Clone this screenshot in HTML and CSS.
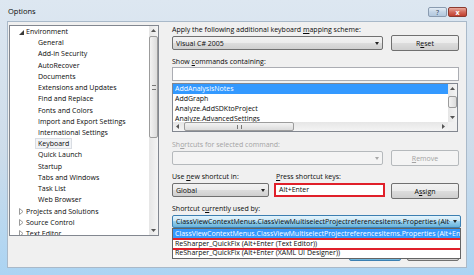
FILE: index.html
```html
<!DOCTYPE html>
<html lang="en">
<head>
    <meta charset="UTF-8">
    <meta name="viewport" content="width=device-width, initial-scale=1.0">
    <title>Options</title>
    <link rel="stylesheet" href="styles.css">
</head>
<body>
    <div class="window">
        <div class="titlebar">
            <span class="title">Options</span>
            <div class="caption-buttons">
                <span class="caption-button help">?</span>
                <span class="caption-button close">x</span>
            </div>
        </div>

        <div class="client">
            <!-- Category tree on the left -->
            <div class="tree">
                <ul class="tree-items">
                    <li class="node"><svg class="twisty" width="5" height="5" viewBox="0 0 5 5"><path d="M5 0V5H0Z" fill="#3a3a3a"/></svg>Environment</li>
                    <li class="leaf">General</li>
                    <li class="leaf">Add-in Security</li>
                    <li class="leaf">AutoRecover</li>
                    <li class="leaf">Documents</li>
                    <li class="leaf">Extensions and Updates</li>
                    <li class="leaf">Find and Replace</li>
                    <li class="leaf">Fonts and Colors</li>
                    <li class="leaf">Import and Export Settings</li>
                    <li class="leaf">International Settings</li>
                    <li class="leaf"><span class="current">Keyboard</span></li>
                    <li class="leaf">Quick Launch</li>
                    <li class="leaf">Startup</li>
                    <li class="leaf">Tabs and Windows</li>
                    <li class="leaf">Task List</li>
                    <li class="leaf">Web Browser</li>
                    <li class="node"><svg class="twisty" width="5" height="7" viewBox="0 0 5 7"><path d="M0.5 0.5L4 3.5L0.5 6.5Z" fill="none" stroke="#9a9a9a"/></svg>Projects and Solutions</li>
                    <li class="node"><svg class="twisty" width="5" height="7" viewBox="0 0 5 7"><path d="M0.5 0.5L4 3.5L0.5 6.5Z" fill="none" stroke="#9a9a9a"/></svg>Source Control</li>
                    <li class="node"><svg class="twisty" width="5" height="7" viewBox="0 0 5 7"><path d="M0.5 0.5L4 3.5L0.5 6.5Z" fill="none" stroke="#9a9a9a"/></svg>Text Editor</li>
                </ul>
                <div class="vscroll tree-scroll">
                    <div class="arrow"><svg width="5" height="3" viewBox="0 0 5 3"><path d="M0 3L2.5 0L5 3Z" fill="#555"/></svg></div>
                    <div class="track"><div class="thumb tree-thumb"><span class="grip-h"></span></div></div>
                    <div class="arrow"><svg width="5" height="3" viewBox="0 0 5 3"><path d="M0 0L2.5 3L5 0Z" fill="#555"/></svg></div>
                </div>
            </div>

            <!-- Keyboard settings -->
            <div class="settings">
                <div class="label">Apply the following additional keyboard <u>m</u>apping scheme:</div>
                <div class="row">
                    <div class="select scheme"><span class="value">Visual C# 2005</span><span class="caret"></span></div>
                    <div class="button">R<u>e</u>set</div>
                </div>

                <div class="label spaced">Show <u>c</u>ommands containing:</div>
                <div class="textbox"></div>

                <div class="listbox">
                    <ul class="list-items">
                        <li class="selected">AddAnalysisNotes</li>
                        <li>AddGraph</li>
                        <li>Analyze.AddSDKtoProject</li>
                        <li>Analyze.AdvancedSettings</li>
                    </ul>
                    <div class="vscroll">
                        <div class="arrow"><svg width="5" height="3" viewBox="0 0 5 3"><path d="M0 3L2.5 0L5 3Z" fill="#555"/></svg></div>
                        <div class="track"><div class="thumb list-thumb"></div></div>
                        <div class="arrow"><svg width="5" height="3" viewBox="0 0 5 3"><path d="M0 0L2.5 3L5 0Z" fill="#555"/></svg></div>
                    </div>
                    <div class="hscroll">
                        <div class="arrow"><svg width="3" height="5" viewBox="0 0 3 5"><path d="M3 0L0 2.5L3 5Z" fill="#555"/></svg></div>
                        <div class="track"><div class="thumb list-hthumb"><span class="grip-v"></span></div></div>
                        <div class="arrow"><svg width="3" height="5" viewBox="0 0 3 5"><path d="M0 0L3 2.5L0 5Z" fill="#555"/></svg></div>
                    </div>
                    <div class="corner"></div>
                </div>

                <div class="label disabled section">Sh<u>o</u>rtcuts for selected command:</div>
                <div class="row">
                    <div class="select scheme disabled"><span class="value"></span><span class="caret"></span></div>
                    <div class="button disabled"><u>R</u>emove</div>
                </div>

                <div class="row labels">
                    <div class="label scope-label">Use <u>n</u>ew shortcut in:</div>
                    <div class="label"><u>P</u>ress shortcut keys:</div>
                </div>
                <div class="row">
                    <div class="select scope"><span class="value">Global</span><span class="caret"></span></div>
                    <div class="textbox keys">Alt+Enter</div>
                    <div class="button assign">A<u>s</u>sign</div>
                </div>

                <div class="label used-label">Shortcut c<u>u</u>rrently used by:</div>
                <div class="combo">
                    <div class="select open"><span class="value">ClassViewContextMenus.ClassViewMultiselectProjectreferencesItems.Properties (Alt+Enter (Global))</span><span class="caret"></span></div>
                    <ul class="dropdown">
                        <li class="selected">ClassViewContextMenus.ClassViewMultiselectProjectreferencesItems.Properties (Alt+Enter (Global))</li>
                        <li class="marked">ReSharper_QuickFix (Alt+Enter (Text Editor))</li>
                        <li>ReSharper_QuickFix (Alt+Enter (XAML UI Designer))</li>
                    </ul>
                </div>

                <div class="dialog-buttons">
                    <div class="button default">OK</div>
                    <div class="button">Cancel</div>
                </div>
            </div>
        </div>
    </div>
</body>
</html>
```

FILE: styles.css
```css
body {
    margin: 0;
    width: 474px;
    height: 275px;
    overflow: hidden;
    font-family: "Open Sans", sans-serif;
    font-size: 7px;
    color: #0a0a0a;
    background: #a9d5f4;
}
ul {
    list-style: none;
    margin: 0;
    padding: 0;
}
.window {
    height: 275px;
    box-sizing: border-box;
    padding: 0 7px 7px;
    display: flex;
    flex-direction: column;
    background: linear-gradient(#dde7f1, #cddcea 55%, #abd4f3);
}
.titlebar {
    height: 21px;
    display: flex;
    justify-content: space-between;
    align-items: center;
}
.title {
    margin-left: 1px;
    font-size: 7.5px;
}
.caption-buttons {
    align-self: flex-start;
    margin-top: 7px;
    display: flex;
    gap: 1px;
}
.caption-button {
    width: 19px;
    height: 10px;
    box-sizing: border-box;
    border-radius: 2px;
    display: flex;
    justify-content: center;
    align-items: center;
    font-size: 7px;
    line-height: 1;
}
.help {
    border: 1px solid #8a9bb0;
    background: linear-gradient(#e4edf6, #c3d4e6 50%, #b3c8de);
    color: #2c3e55;
}
.close {
    border: 1px solid #8b3a30;
    background: linear-gradient(#e9a99c, #d2695b 50%, #c1402f);
    color: #fff;
    font-weight: bold;
}
.client {
    flex: 1;
    display: flex;
    gap: 13px;
    padding: 3px 7px 0 1px;
    background: #f0f0f0;
    border: 1px solid #a9b9c9;
    overflow: hidden;
}

/* tree */
.tree {
    width: 150px;
    height: 211px;
    box-sizing: border-box;
    display: flex;
    background: #fff;
    border: 1px solid #828790;
    overflow: hidden;
}
.tree-items {
    flex: 1;
    line-height: 11.22px;
    white-space: nowrap;
    overflow: hidden;
}
.node {
    padding-left: 7px;
}
.twisty {
    width: 9px;
    vertical-align: -1px;
}
.leaf {
    padding-left: 28px;
}
.current {
    margin-left: -3px;
    padding: 0 2px;
    background: #f2f4f7;
    border: 1px solid #d9dde3;
}

/* scrollbars */
.vscroll {
    width: 9px;
    display: flex;
    flex-direction: column;
    background: linear-gradient(90deg, #e6e6e6, #f4f4f4);
}
.hscroll {
    height: 9px;
    display: flex;
    background: linear-gradient(#e6e6e6, #f4f4f4);
}
.arrow {
    flex: 0 0 9px;
    display: flex;
    justify-content: center;
    align-items: center;
}
.track {
    flex: 1;
    display: flex;
    flex-direction: column;
}
.hscroll .track {
    flex-direction: row;
}
.thumb {
    box-sizing: border-box;
    border: 1px solid #9c9c9c;
    border-radius: 2px;
    background: linear-gradient(90deg, #f3f3f3, #dcdcdc);
    display: flex;
    justify-content: center;
    align-items: center;
}
.tree-thumb {
    height: 102px;
    margin-top: 1px;
}
.list-thumb {
    height: 12px;
    margin-top: 3px;
}
.list-hthumb {
    width: 110px;
    margin-left: 2px;
    background: linear-gradient(#f3f3f3, #dcdcdc);
}
.grip-h {
    width: 4px;
    height: 3px;
    border-top: 1px solid #777;
    border-bottom: 1px solid #777;
}
.grip-v {
    width: 3px;
    height: 4px;
    border-left: 1px solid #777;
    border-right: 1px solid #777;
}

/* settings column */
.settings {
    width: 287px;
    display: flex;
    flex-direction: column;
}
.label {
    height: 10px;
    line-height: 10px;
    white-space: nowrap;
}
.disabled {
    color: #a3a3a3;
}
.spaced {
    margin-top: 6px;
}
.section {
    margin-top: 8px;
}
.row {
    display: flex;
    gap: 8px;
    align-items: flex-start;
}
.labels {
    margin-top: 6px;
    gap: 0;
}
.labels + .row {
    margin-top: 1px;
    gap: 0;
}
.scope-label {
    width: 104px;
}
.select {
    height: 14px;
    box-sizing: border-box;
    display: flex;
    align-items: center;
    padding: 0 3px;
    border: 1px solid #707070;
    border-radius: 2px;
    background: linear-gradient(#f2f2f2, #ebebeb 50%, #dddddd 50%, #cfcfcf);
}
.value {
    flex: 1;
    overflow: hidden;
    white-space: nowrap;
}
.caret {
    width: 0;
    height: 0;
    margin-left: 3px;
    border-left: 2.5px solid transparent;
    border-right: 2.5px solid transparent;
    border-top: 3px solid #222;
}
.scheme {
    width: 211px;
    margin-top: 1px;
}
.select.disabled {
    border-color: #b5b9bc;
    background: #f4f4f4;
}
.select.disabled .caret {
    border-top-color: #a8a8a8;
}
.scope {
    width: 97px;
}
.button {
    width: 68px;
    height: 16px;
    box-sizing: border-box;
    display: flex;
    justify-content: center;
    align-items: center;
    border: 1px solid #707070;
    border-radius: 2px;
    background: linear-gradient(#f2f2f2, #ebebeb 50%, #dddddd 50%, #cfcfcf);
}
.button.disabled {
    border-color: #b5b9bc;
    background: #f4f4f4;
}
.assign {
    margin-left: 6px;
}
.textbox {
    height: 14px;
    box-sizing: border-box;
    padding-left: 3px;
    line-height: 12px;
    background: #fff;
    border: 1px solid #abadb3;
}
.keys {
    width: 111px;
    margin-left: 5px;
    border: 2px solid #e0202a;
    line-height: 10px;
}

/* command list */
.listbox {
    width: 286px;
    height: 49px;
    margin-top: 2px;
    box-sizing: border-box;
    display: grid;
    grid-template-columns: 1fr 9px;
    grid-template-rows: 1fr 9px;
    background: #fff;
    border: 1px solid #828790;
}
.list-items {
    line-height: 10px;
    overflow: hidden;
}
.list-items li {
    padding-left: 2px;
}
.selected {
    background: #3399ff;
    color: #fff;
}
.corner {
    background: #f0f0f0;
}

/* shortcut in use */
.used-label {
    margin-top: 5px;
}
.combo {
    position: relative;
    margin: 1px -2px 0 0;
}
.open {
    height: 13px;
    border-color: #3c7fb1;
    background: linear-gradient(#e5f4fc, #c4e5f6 50%, #98d1ef 50%, #68b3db);
}
.dropdown {
    position: absolute;
    top: 13px;
    left: 0;
    right: 0;
    line-height: 9.5px;
    background: #fff;
    border: 1px solid #646464;
    white-space: nowrap;
    overflow: hidden;
    z-index: 1;
}
.dropdown li {
    padding-left: 2px;
}
.dropdown .marked {
    position: relative;
}
.dropdown .marked::after {
    content: "";
    position: absolute;
    left: -5px;
    right: -7px;
    top: -1px;
    bottom: -2px;
    border: 2px solid #e0202a;
}
.dialog-buttons {
    margin-top: 18px;
    display: flex;
    justify-content: flex-end;
    gap: 6px;
}
.dialog-buttons .button {
    width: 52px;
    height: 15px;
}
.default {
    border-color: #3c7fb1;
    background: linear-gradient(#e5f4fc, #c4e5f6 50%, #98d1ef 50%, #68b3db);
}
```
